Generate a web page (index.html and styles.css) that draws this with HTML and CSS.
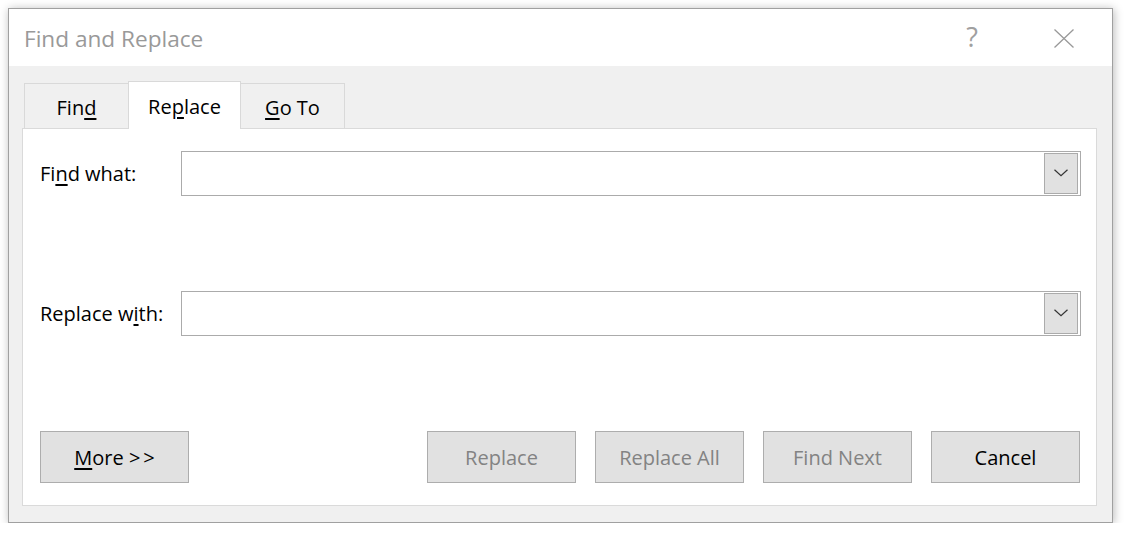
FILE: index.html
```html
<!DOCTYPE html>
<html>
<head>
<meta charset="utf-8">
<title>Find and Replace</title>
<link rel="stylesheet" href="styles.css">
</head>
<body>
<div class="window">
  <div class="titlebar">
    <span class="title">Find and Replace</span>
    <div class="title-actions">
      <span class="help">?</span>
      <svg class="close" width="20" height="19" viewBox="0 0 20 19">
        <path d="M0.5 0.5 L19.5 18.5 M19.5 0.5 L0.5 18.5" stroke="#999" stroke-width="1.3" fill="none"/>
      </svg>
    </div>
  </div>
  <div class="content">
    <div class="tabs">
      <div class="tab">Fin<u>d</u></div>
      <div class="tab active">Re<u>p</u>lace</div>
      <div class="tab tab-goto"><u>G</u>o To</div>
    </div>
    <div class="panel">
      <div class="row">
        <div class="label">Fi<u>n</u>d what:</div>
        <div class="combo">
          <div class="combo-field"></div>
          <div class="combo-btn">
            <svg width="14" height="8" viewBox="0 0 14 8"><path d="M0.5 0.8 L7 6.8 L13.5 0.8" stroke="#333" stroke-width="1.2" fill="none"/></svg>
          </div>
        </div>
      </div>
      <div class="row row-second">
        <div class="label">Replace w<u>i</u>th:</div>
        <div class="combo">
          <div class="combo-field"></div>
          <div class="combo-btn">
            <svg width="14" height="8" viewBox="0 0 14 8"><path d="M0.5 0.8 L7 6.8 L13.5 0.8" stroke="#333" stroke-width="1.2" fill="none"/></svg>
          </div>
        </div>
      </div>
      <div class="buttons">
        <div class="btn"><span class="btn-text"><u>M</u>ore <span class="chev">&gt;&gt;</span></span></div>
        <div class="btn-group">
          <div class="btn disabled">Replace</div>
          <div class="btn disabled">Replace All</div>
          <div class="btn disabled">Find Next</div>
          <div class="btn">Cancel</div>
        </div>
      </div>
    </div>
  </div>
</div>
</body>
</html>
```

FILE: styles.css
```css
* { box-sizing: border-box; }
html, body { margin: 0; padding: 0; background: #ffffff; }
body {
  padding: 8px 0 0 8px;
  font-family: "Open Sans", "Noto Sans", "Liberation Sans", sans-serif;
  color: #000;
}
.window {
  width: 1105px;
  height: 515px;
  border: 1px solid #a0a0a0;
  background: #f0f0f0;
  box-shadow: 1px 1px 9px rgba(0, 0, 0, 0.28);
  display: flex;
  flex-direction: column;
}
.titlebar {
  height: 57px;
  flex: none;
  background: #ffffff;
  display: flex;
  align-items: center;
  padding-left: 15px;
}
.title {
  font-size: 22.6px;
  color: #999999;
  margin-top: 1px;
}
.title-actions {
  margin-left: auto;
  margin-right: 38px;
  display: flex;
  align-items: center;
}
.help {
  font-size: 27px;
  font-weight: 400;
  color: #a0a0a0;
  line-height: 1;
  margin-right: 76px;
  margin-top: -3px;
}
.close { display: block; margin-top: 1px; }
.content {
  flex: 1;
  display: flex;
  flex-direction: column;
  padding: 15px 15px 16px 13px;
}
.tabs {
  display: flex;
  align-items: flex-end;
  padding-left: 2px;
  margin-bottom: -1px;
  position: relative;
  z-index: 1;
}
.tab {
  width: 105px;
  height: 45px;
  margin-bottom: 1px;
  border: 1px solid #d9d9d9;
  border-bottom: none;
  background: #f0f0f0;
  display: flex;
  align-items: center;
  justify-content: center;
  font-size: 20px;
  padding-top: 3px;
}
.tab + .tab { margin-left: -1px; }
.tab.active {
  width: 113px;
  height: 48px;
  margin-bottom: 0;
  background: #ffffff;
  position: relative;
  z-index: 2;
  padding-top: 1px;
}
.tab u, .label u, .btn u { text-underline-offset: 3px; text-decoration-thickness: 2px; }
.panel {
  flex: 1;
  background: #ffffff;
  border: 1px solid #dadada;
  padding: 22px 15px 0 17px;
  display: flex;
  flex-direction: column;
}
.row {
  display: flex;
  align-items: center;
  height: 45px;
}
.row-second { margin-top: 95px; }
.label {
  width: 141px;
  flex: none;
  font-size: 20px;
}
.combo {
  flex: 1;
  height: 45px;
  border: 1px solid #ababab;
  padding: 1px;
  display: flex;
}
.combo-field { flex: 1; }
.combo-btn {
  width: 34px;
  border: 1px solid #ababab;
  background: #e1e1e1;
  margin-right: 1px;
  display: flex;
  align-items: center;
  justify-content: center;
}
.combo-btn svg { display: block; margin-top: -1px; }
.buttons {
  display: flex;
  margin-top: 95px;
  margin-right: 1px;
}
.btn-group {
  margin-left: auto;
  display: flex;
  gap: 19px;
}
.btn {
  width: 149px;
  height: 52px;
  background: #e1e1e1;
  border: 1px solid #adadad;
  display: flex;
  align-items: center;
  justify-content: center;
  font-size: 20px;
  color: #000;
  white-space: nowrap;
}
.btn-text { white-space: nowrap; }
.chev { letter-spacing: 3px; margin-right: -3px; }
.btn.disabled { color: #838383; }
```
